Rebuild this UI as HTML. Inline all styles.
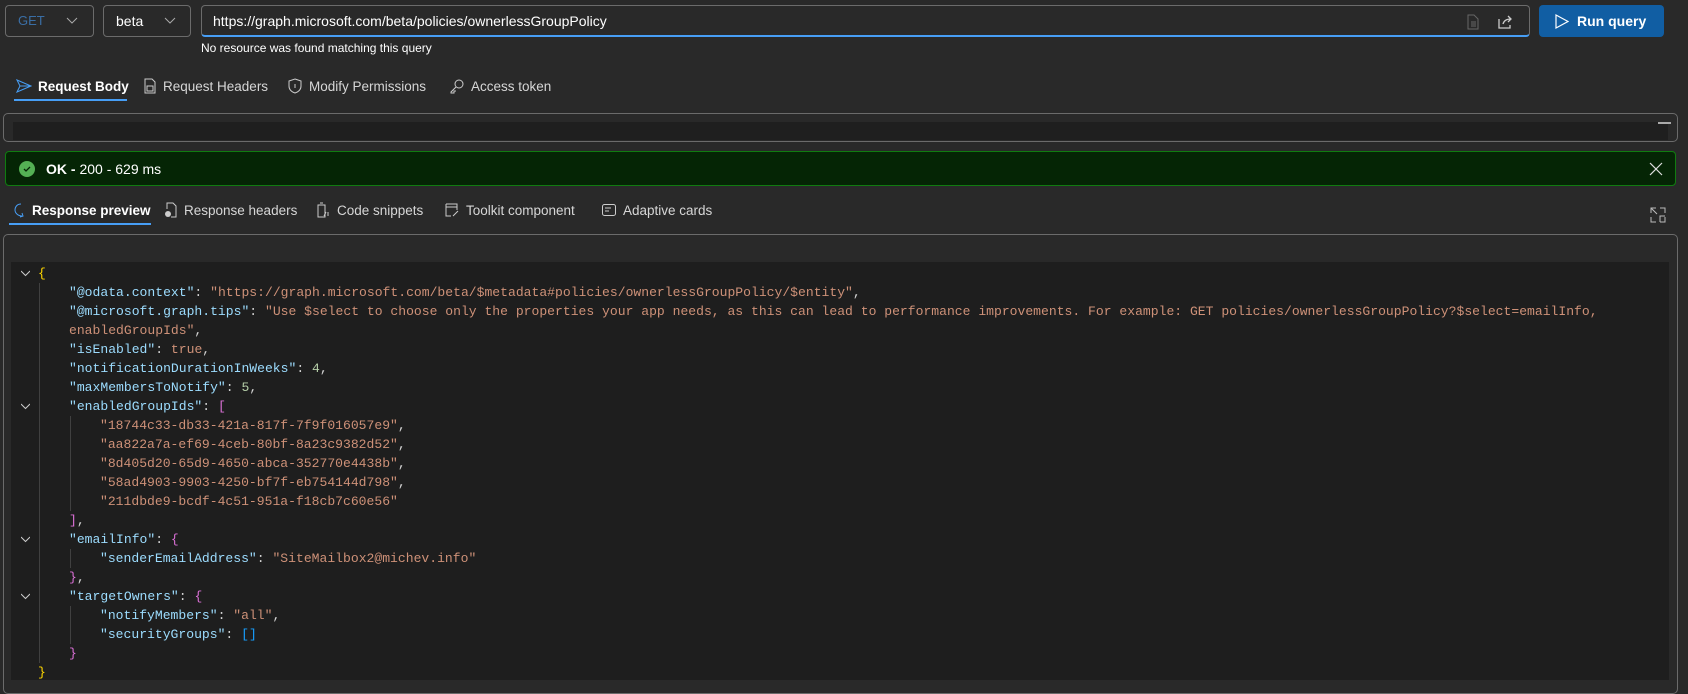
<!DOCTYPE html>
<html><head><meta charset="utf-8"><style>
*{box-sizing:border-box;margin:0;padding:0}
body{width:1688px;height:680px;background:#292929;font-family:"Liberation Sans",sans-serif;color:#fff;position:relative;overflow:hidden}
.a{position:absolute}
.box{border:1px solid #6b6b6b;border-radius:4px;background:#292929}
.tab{position:absolute;font-size:13.5px;color:#d6d6d6;display:flex;align-items:center;gap:6px}
.tab b{color:#fff}
.code{position:absolute;left:11px;top:262px;width:1658px;height:418px;background:#1e1e1e;font-family:"Liberation Mono",monospace;font-size:13.07px;overflow:hidden}
.in{position:absolute;left:0;top:2px;width:100%;height:100%}
.ln{position:absolute;left:0;height:19px;line-height:19px;white-space:pre}
.k{color:#9cdcfe}.s{color:#ce9178}.n{color:#b5cea8}.p{color:#d4d4d4}.y{color:#ffd700}.m{color:#da70d6}.b{color:#179fff}.t{color:#ce9178}
.g{position:absolute;width:1px;background:#404040}
.f{position:absolute;left:10px;width:9px;height:9px}
</style></head><body>
<div class="a box" style="left:5px;top:5px;width:89px;height:32px"><span class="a" style="left:12px;top:7px;font-size:13px;color:#3a6ea5">GET</span><svg class="a" style="left:60px;top:11px" width="12" height="8"><path d="M1 1l5 5 5-5" stroke="#aaa" fill="none"/></svg></div>
<div class="a box" style="left:103px;top:5px;width:88px;height:32px"><span class="a" style="left:12px;top:7px;font-size:14px;color:#fff">beta</span><svg class="a" style="left:60px;top:11px" width="12" height="8"><path d="M1 1l5 5 5-5" stroke="#aaa" fill="none"/></svg></div>
<div class="a box" style="left:201px;top:5px;width:1329px;height:32px;border-bottom:2px solid #479ef5"><span class="a" style="left:11px;top:7px;font-size:14px;color:#fff">https://graph.microsoft.com/beta/policies/ownerlessGroupPolicy</span>
<svg class="a" style="left:1264px;top:8px" width="14" height="16"><path d="M2 1h6l4 4v10H2z M5 8h5M5 10h5M5 12h5" stroke="#666" fill="none"/></svg>
<svg class="a" style="left:1294px;top:7px" width="18" height="18"><path d="M3 6v9h11v-3 M7 11c1-4 4-5 8-5M12 3l3 3-3 3" stroke="#ccc" fill="none" stroke-width="1.3"/></svg></div>
<div class="a" style="left:1539px;top:5px;width:125px;height:32px;background:#115ea3;border-radius:4px"><svg class="a" style="left:16px;top:9px" width="14" height="15"><path d="M1 1l12 6.5L1 14z" stroke="#fff" fill="none" stroke-width="1.2"/></svg><span class="a" style="left:38px;top:8px;font-size:14px;font-weight:bold">Run query</span></div>
<div class="a" style="left:201px;top:41px;font-size:12px;color:#fff">No resource was found matching this query</div>

<div class="tab" style="left:16px;top:78px"><svg width="16" height="16"><path d="M1 2l14 6-14 6 3-6z M4 8h11" stroke="#479ef5" fill="none"/></svg><b>Request Body</b></div>
<div class="a" style="left:14px;top:99px;width:113px;height:2px;background:#479ef5"></div>
<div class="tab" style="left:143px;top:78px"><svg width="14" height="16"><path d="M2 1h7l3 3v11H2z M4 8h6v5H4z" stroke="#ccc" fill="none"/></svg>Request Headers</div>
<div class="tab" style="left:287px;top:78px"><svg width="16" height="16"><path d="M8 1l6 2v5c0 4-3 6-6 7-3-1-6-3-6-7V3z M8 6v4" stroke="#ccc" fill="none"/></svg>Modify Permissions</div>
<div class="tab" style="left:449px;top:78px"><svg width="16" height="16"><circle cx="10" cy="6" r="4" stroke="#ccc" fill="none"/><path d="M7 9l-5 5v1h3v-2h2" stroke="#ccc" fill="none"/></svg>Access token</div>

<div class="a box" style="left:3px;top:113px;width:1675px;height:29px;border-radius:5px"><div class="a" style="left:9px;top:8px;width:1655px;height:18px;background:#1f1f1f"></div><div class="a" style="left:1654px;top:8px;width:13px;height:2px;background:#aaa"></div></div>

<div class="a" style="left:5px;top:151px;width:1671px;height:35px;background:#052505;border:1px solid #107c10;border-radius:4px">
<svg class="a" style="left:13px;top:9px" width="16" height="16"><circle cx="8" cy="8" r="8" fill="#54b054"/><path d="M5 8l2 2 4-4" stroke="#052505" fill="none" stroke-width="1.3"/></svg>
<span class="a" style="left:40px;top:9px;font-size:14px"><b>OK - </b>200 - 629 ms</span>
<svg class="a" style="left:1643px;top:10px" width="14" height="14"><path d="M1 1l12 12M13 1L1 13" stroke="#ddd" stroke-width="1.2"/></svg></div>

<div class="tab" style="left:12px;top:202px"><svg width="14" height="16"><path d="M9 2C5 2 3 5 3 8s3 6 7 6M10 11l1 3-3 1" stroke="#479ef5" fill="none"/></svg><b>Response preview</b></div>
<div class="a" style="left:9px;top:223px;width:142px;height:2px;background:#479ef5"></div>
<div class="tab" style="left:164px;top:202px"><svg width="14" height="16"><path d="M3 7V1h6l3 3v11H7" stroke="#ccc" fill="none"/><circle cx="4" cy="12" r="3" fill="#ccc"/></svg>Response headers</div>
<div class="tab" style="left:315px;top:202px"><svg width="16" height="16"><path d="M3 3h7v12H3z M5 1h3 M9 14l2-4 M13 10v4" stroke="#ccc" fill="none"/></svg>Code snippets</div>
<div class="tab" style="left:444px;top:202px"><svg width="16" height="16"><path d="M2 2h11v6 M2 2v12h5 M2 5h11 M9 14l5-5" stroke="#ccc" fill="none"/></svg>Toolkit component</div>
<div class="tab" style="left:601px;top:202px"><svg width="16" height="16"><rect x="1.5" y="2.5" width="13" height="11" rx="2" stroke="#ccc" fill="none"/><path d="M4 6h6M4 9h4" stroke="#ccc"/></svg>Adaptive cards</div>
<svg class="a" style="left:1650px;top:207px" width="16" height="16"><path d="M1 6V1h5M1 1l6 6M15 10v5h-5M10 15V9h5M1 10v5h5M10 1h5v5" stroke="#bbb" fill="none"/></svg>

<div class="a" style="left:3px;top:234px;width:1675px;height:460px;border:1px solid #6b6b6b;border-radius:5px"></div>
<div class="code"><div class="in">
<div class="g" style="left:28px;top:19px;height:380px"></div>
<div class="g" style="left:59px;top:152px;height:95px"></div>
<div class="g" style="left:59px;top:285px;height:19px"></div>
<div class="g" style="left:59px;top:342px;height:38px"></div>
<svg class="f" style="top:5px" viewBox="0 0 9 9"><path d="M0 2l4.5 4.5L9 2" stroke="#ccc" fill="none"/></svg>
<svg class="f" style="top:138px" viewBox="0 0 9 9"><path d="M0 2l4.5 4.5L9 2" stroke="#ccc" fill="none"/></svg>
<svg class="f" style="top:271px" viewBox="0 0 9 9"><path d="M0 2l4.5 4.5L9 2" stroke="#ccc" fill="none"/></svg>
<svg class="f" style="top:328px" viewBox="0 0 9 9"><path d="M0 2l4.5 4.5L9 2" stroke="#ccc" fill="none"/></svg>
<div class="ln" style="top:0;left:27px"><span class="y">{</span></div>
<div class="ln" style="top:19px;left:58px"><span class="k">"@odata.context"</span><span class="p">: </span><span class="s">"https://graph.microsoft.com/beta/$metadata#policies/ownerlessGroupPolicy/$entity"</span><span class="p">,</span></div>
<div class="ln" style="top:38px;left:58px"><span class="k">"@microsoft.graph.tips"</span><span class="p">: </span><span class="s">"Use $select to choose only the properties your app needs, as this can lead to performance improvements. For example: GET policies/ownerlessGroupPolicy?$select=emailInfo,</span></div>
<div class="ln" style="top:57px;left:58px"><span class="s">enabledGroupIds"</span><span class="p">,</span></div>
<div class="ln" style="top:76px;left:58px"><span class="k">"isEnabled"</span><span class="p">: </span><span class="t">true</span><span class="p">,</span></div>
<div class="ln" style="top:95px;left:58px"><span class="k">"notificationDurationInWeeks"</span><span class="p">: </span><span class="n">4</span><span class="p">,</span></div>
<div class="ln" style="top:114px;left:58px"><span class="k">"maxMembersToNotify"</span><span class="p">: </span><span class="n">5</span><span class="p">,</span></div>
<div class="ln" style="top:133px;left:58px"><span class="k">"enabledGroupIds"</span><span class="p">: </span><span class="m">[</span></div>
<div class="ln" style="top:152px;left:89px"><span class="s">"18744c33-db33-421a-817f-7f9f016057e9"</span><span class="p">,</span></div>
<div class="ln" style="top:171px;left:89px"><span class="s">"aa822a7a-ef69-4ceb-80bf-8a23c9382d52"</span><span class="p">,</span></div>
<div class="ln" style="top:190px;left:89px"><span class="s">"8d405d20-65d9-4650-abca-352770e4438b"</span><span class="p">,</span></div>
<div class="ln" style="top:209px;left:89px"><span class="s">"58ad4903-9903-4250-bf7f-eb754144d798"</span><span class="p">,</span></div>
<div class="ln" style="top:228px;left:89px"><span class="s">"211dbde9-bcdf-4c51-951a-f18cb7c60e56"</span></div>
<div class="ln" style="top:247px;left:58px"><span class="m">]</span><span class="p">,</span></div>
<div class="ln" style="top:266px;left:58px"><span class="k">"emailInfo"</span><span class="p">: </span><span class="m">{</span></div>
<div class="ln" style="top:285px;left:89px"><span class="k">"senderEmailAddress"</span><span class="p">: </span><span class="s">"SiteMailbox2@michev.info"</span></div>
<div class="ln" style="top:304px;left:58px"><span class="m">}</span><span class="p">,</span></div>
<div class="ln" style="top:323px;left:58px"><span class="k">"targetOwners"</span><span class="p">: </span><span class="m">{</span></div>
<div class="ln" style="top:342px;left:89px"><span class="k">"notifyMembers"</span><span class="p">: </span><span class="s">"all"</span><span class="p">,</span></div>
<div class="ln" style="top:361px;left:89px"><span class="k">"securityGroups"</span><span class="p">: </span><span class="b">[]</span></div>
<div class="ln" style="top:380px;left:58px"><span class="m">}</span></div>
<div class="ln" style="top:399px;left:27px"><span class="y">}</span></div>
</div></div>
</body></html>
